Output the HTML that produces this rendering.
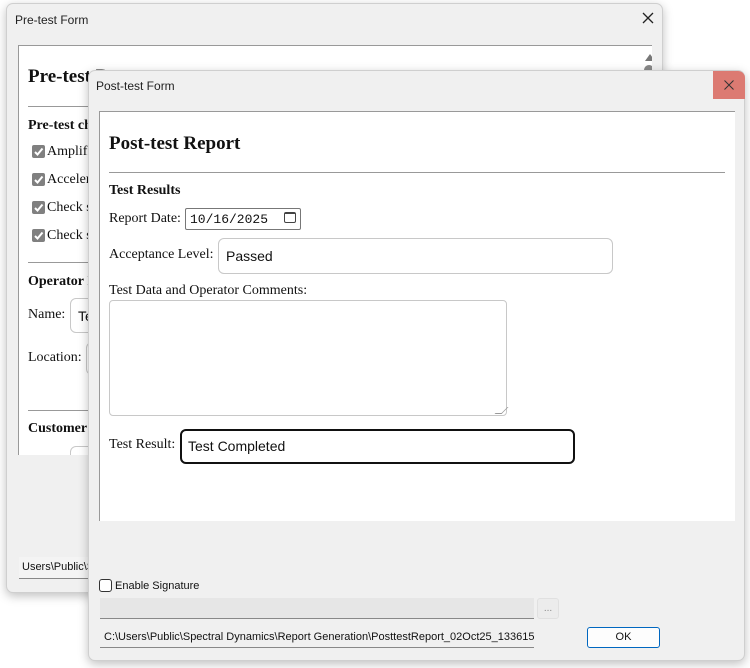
<!DOCTYPE html>
<html><head><meta charset="utf-8"><style>
*{box-sizing:border-box;margin:0;padding:0}
body{width:750px;height:668px;background:#fff;position:relative;overflow:hidden;font-family:"Liberation Serif",serif;color:#111}
.abs{position:absolute}
.win{position:absolute;background:#f0f0f0;border:1px solid #cfcfcf;border-radius:7px;box-shadow:0 3px 10px rgba(0,0,0,.25)}
.ttl{position:absolute;font:12px "Liberation Sans",sans-serif;color:#222}
.cb{position:absolute;width:13px;height:13px;background:#808080;border-radius:2px}
.inp{position:absolute;border:1px solid #c8c8c8;border-radius:6px;background:#fff}
.lbl{position:absolute;font-size:14px;white-space:nowrap}
.ui{font-family:"Liberation Sans",sans-serif}
</style></head><body>

<!-- back window -->
<div class="win" style="left:6px;top:3px;width:657px;height:590px">
  <div class="ttl" style="left:8px;top:9px">Pre-test Form</div>
  <svg class="abs" style="left:635px;top:8px" width="12" height="12"><path d="M1 1L11 11M11 1L1 11" stroke="#222" stroke-width="1.3"/></svg>
  <div class="abs" style="left:11px;top:41px;width:634px;height:410px;background:#fff;border-top:1px solid #999;border-left:1px solid #999;overflow:hidden">
    <div class="abs" style="left:9px;top:20px;font-weight:bold;font-size:19px">Pre-test Report</div>
    <div class="abs" style="left:9px;top:60px;width:600px;border-top:1px solid #999"></div>
    <div class="abs" style="left:9px;top:72px;font-weight:bold;font-size:14px">Pre-test checks</div>
    <svg width="0" height="0" style="position:absolute"><defs><path id="ck" d="M3 7L5.5 9.5L10.5 3.5" stroke="#fff" stroke-width="2" fill="none"/></defs></svg>
    <div class="cb" style="left:13px;top:99px"><svg width="13" height="13"><use href="#ck"/></svg></div><div class="lbl" style="left:28px;top:98px">Amplifier</div>
    <div class="cb" style="left:13px;top:127px"><svg width="13" height="13"><use href="#ck"/></svg></div><div class="lbl" style="left:28px;top:126px">Accelerometer</div>
    <div class="cb" style="left:13px;top:155px"><svg width="13" height="13"><use href="#ck"/></svg></div><div class="lbl" style="left:28px;top:154px">Check s</div>
    <div class="cb" style="left:13px;top:183px"><svg width="13" height="13"><use href="#ck"/></svg></div><div class="lbl" style="left:28px;top:182px">Check s</div>
    <div class="abs" style="left:9px;top:216px;width:600px;border-top:1px solid #999"></div>
    <div class="abs" style="left:9px;top:228px;font-weight:bold;font-size:14px">Operator Info</div>
    <div class="lbl" style="left:9px;top:261px">Name:</div>
    <div class="inp ui" style="left:51px;top:252px;width:300px;height:35px;padding:9px 7px;font-size:14px">Te</div>
    <div class="lbl" style="left:9px;top:304px">Location:</div>
    <div class="inp" style="left:67px;top:296px;width:300px;height:33px"></div>
    <div class="abs" style="left:9px;top:364px;width:600px;border-top:1px solid #999"></div>
    <div class="abs" style="left:9px;top:375px;font-weight:bold;font-size:14px">Customer</div>
    <div class="inp" style="left:51px;top:400px;width:300px;height:30px"></div>
    <div class="abs" style="left:626px;top:8px;width:0;height:0;border-left:5px solid transparent;border-right:5px solid transparent;border-bottom:7px solid #777"></div>
    <div class="abs" style="left:625px;top:19px;width:10px;height:14px;background:#888;border-radius:5px"></div>
  </div>
  <div class="abs ui" style="left:12px;top:553px;width:200px;height:22px;background:#f4f4f4;border-bottom:1px solid #888;font-size:11px;padding:4px 3px">Users\Public\Spectral</div>
</div>

<!-- front window -->
<div class="win" style="left:88px;top:70px;width:657px;height:591px">
  <div class="ttl" style="left:7px;top:8px">Post-test Form</div>
  <div class="abs" style="left:624px;top:0px;width:32px;height:28px;background:#dc7a72;border-top-right-radius:7px">
    <svg class="abs" style="left:11px;top:9px" width="10" height="10"><path d="M0.5 0.5L9.5 9.5M9.5 0.5L0.5 9.5" stroke="#333" stroke-width="1"/></svg>
  </div>
  <div class="abs" style="left:10px;top:40px;width:636px;height:410px;background:#fff;border-top:1px solid #999;border-left:1px solid #999">
    <div class="abs" style="left:9px;top:21px;font-weight:bold;font-size:19px">Post-test Report</div>
    <div class="abs" style="left:9px;top:60px;width:616px;border-top:1px solid #999"></div>
    <div class="abs" style="left:9px;top:71px;font-weight:bold;font-size:14px">Test Results</div>
    <div class="lbl" style="left:9px;top:99px">Report Date:</div>
    <div class="abs" style="left:85px;top:96px;width:116px;height:22px;border:1px solid #777;border-radius:2px;font:13px 'Liberation Mono',monospace;padding:3px 4px">10/16/2025</div>
    <div class="abs" style="left:184px;top:100px;width:12px;height:11px;border:1px solid #444;border-radius:2px;border-top-width:2px"></div>
    <div class="lbl" style="left:9px;top:135px">Acceptance Level:</div>
    <div class="inp ui" style="left:118px;top:126px;width:395px;height:36px;padding:9px 7px;font-size:14px">Passed</div>
    <div class="lbl" style="left:9px;top:171px">Test Data and Operator Comments:</div>
    <div class="inp" style="left:9px;top:188px;width:398px;height:116px;border-radius:4px"></div>
    <div class="abs" style="left:398px;top:295px;width:7px;height:7px;border-right:1px solid #999;border-bottom:1px solid #999;transform:skew(-45deg)"></div>
    <div class="lbl" style="left:9px;top:325px">Test Result:</div>
    <div class="abs ui" style="left:80px;top:317px;width:395px;height:35px;border:2px solid #111;border-radius:6px;padding:7px 6px;font-size:14px">Test Completed</div>
  </div>
  <div class="abs" style="left:10px;top:508px;width:13px;height:13px;border:1px solid #333;border-radius:3px;background:#fff"></div>
  <div class="abs ui" style="left:26px;top:509px;font-size:11px">Enable Signature</div>
  <div class="abs" style="left:11px;top:527px;width:434px;height:21px;background:#e6e6e6;border-bottom:1px solid #888"></div>
  <div class="abs ui" style="left:448px;top:527px;width:22px;height:21px;background:#ececec;border:1px solid #e0e0e0;border-radius:3px;font-size:10px;color:#888;text-align:center;line-height:20px">...</div>
  <div class="abs ui" style="left:11px;top:556px;width:434px;height:21px;background:#f0f0f0;border-bottom:1px solid #888;font-size:11px;padding:4px 4px;white-space:nowrap;overflow:hidden">C:\Users\Public\Spectral Dynamics\Report Generation\PosttestReport_02Oct25_133615.</div>
  <div class="abs ui" style="left:498px;top:556px;width:73px;height:21px;background:#fdfdfd;border:1px solid #0067c0;border-radius:3px;font-size:11px;text-align:center;line-height:19px">OK</div>
</div>
</body></html>
